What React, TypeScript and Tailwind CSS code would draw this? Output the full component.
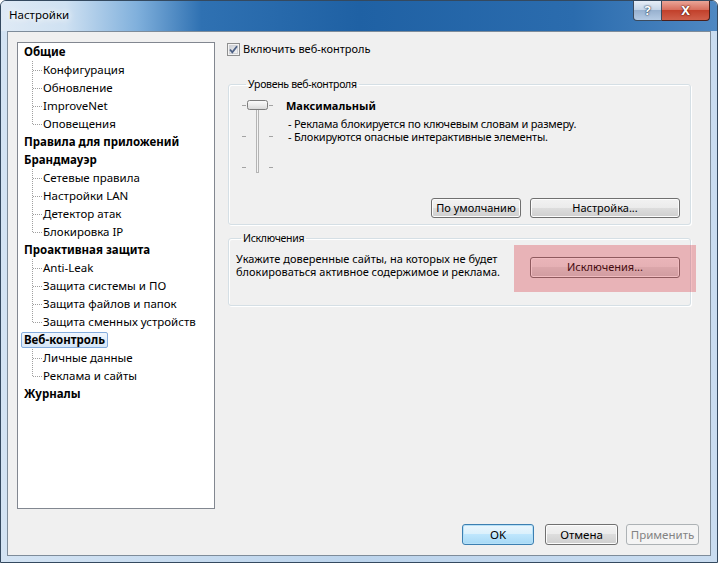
import React from "react";

const font = "font-['Noto_Sans','Liberation_Sans',sans-serif]";

type TreeNode = { label: string; children?: string[]; selected?: boolean };

const tree: TreeNode[] = [
  { label: "Общие", children: ["Конфигурация", "Обновление", "ImproveNet", "Оповещения"] },
  { label: "Правила для приложений" },
  { label: "Брандмауэр", children: ["Сетевые правила", "Настройки LAN", "Детектор атак", "Блокировка IP"] },
  {
    label: "Проактивная защита",
    children: ["Anti-Leak", "Защита системы и ПО", "Защита файлов и папок", "Защита сменных устройств"],
  },
  { label: "Веб-контроль", children: ["Личные данные", "Реклама и сайты"], selected: true },
  { label: "Журналы" },
];

function Connector({ last }: { last: boolean }) {
  return (
    <svg width="11" height="18" className="shrink-0">
      <line x1="0.5" y1="0" x2="0.5" y2={last ? 9 : 18} stroke="#a0a0a0" strokeDasharray="1 1" />
      <line x1="1" y1="9.5" x2="10" y2="9.5" stroke="#a0a0a0" strokeDasharray="1 1" />
    </svg>
  );
}

function TreeView() {
  return (
    <div className="w-[198px] h-[467px] shrink-0 bg-white border border-[#828790] text-[11.5px] text-black">
      {tree.map((node) => (
        <div key={node.label}>
          <div className="h-[18px] flex items-center pl-[3px]">
            <span
              className={
                "h-[16px] flex items-center px-[2px] border rounded-[2px] font-bold " +
                (node.selected
                  ? "border-[#84acdd] bg-gradient-to-b from-[#f0f6fd] to-[#d5e6f8]"
                  : "border-transparent")
              }
            >
              {node.label}
            </span>
          </div>
          {node.children?.map((c, i) => (
            <div key={c} className="h-[18px] flex items-center pl-[14px]">
              <Connector last={i === node.children!.length - 1} />
              <span className="whitespace-nowrap">{c}</span>
            </div>
          ))}
        </div>
      ))}
    </div>
  );
}

function WinButton({
  children,
  className = "",
  kind = "normal",
}: {
  children: React.ReactNode;
  className?: string;
  kind?: "normal" | "default" | "disabled";
}) {
  const look =
    kind === "default"
      ? "border-[#3c7fb1] bg-[linear-gradient(#ebf6fd_0%,#d9f0fc_50%,#bee6fd_50%,#a7d9f5_100%)] shadow-[inset_0_0_0_1px_#b6e0f7]"
      : kind === "disabled"
        ? "border-[#adb2b5] bg-[#f4f4f4] text-[#838383]"
        : "border-[#707070] bg-[linear-gradient(#f2f2f2_0%,#ebebeb_50%,#dddddd_50%,#cfcfcf_100%)] shadow-[inset_0_0_0_1px_#fcfcfc]";
  return (
    <div
      className={"flex items-center justify-center border rounded-[3px] whitespace-nowrap " + look + " " + className}
    >
      {children}
    </div>
  );
}

function Checkbox() {
  return (
    <svg width="13" height="13" className="shrink-0">
      <defs>
        <linearGradient id="cb" x1="0" y1="0" x2="1" y2="1">
          <stop offset="0" stopColor="#cbcfd5" />
          <stop offset="1" stopColor="#f6f6f6" />
        </linearGradient>
      </defs>
      <rect x="0.5" y="0.5" width="12" height="12" fill="#f4f4f4" stroke="#8e8f8f" />
      <rect x="2.5" y="2.5" width="8" height="8" fill="url(#cb)" stroke="#d0d2d6" />
      <path d="M3 6.5 L5.3 9.3 L10 3.2" fill="none" stroke="#4d6185" strokeWidth="1.8" />
    </svg>
  );
}

function Slider() {
  const ticks = [7.5, 38.5, 69.5];
  return (
    <svg width="34" height="76" className="shrink-0">
      <defs>
        <linearGradient id="th" x1="0" y1="0" x2="0" y2="1">
          <stop offset="0" stopColor="#fbfbfb" />
          <stop offset="0.5" stopColor="#ececec" />
          <stop offset="1" stopColor="#d6d6d6" />
        </linearGradient>
      </defs>
      {ticks.map((y) => (
        <g key={y} stroke="#a3a3a3">
          <line x1="1" y1={y} x2="5" y2={y} />
          <line x1="28" y1={y} x2="32" y2={y} />
        </g>
      ))}
      <rect x="15.5" y="4.5" width="2" height="70" fill="#f4f4f4" stroke="#b4b4b4" />
      <rect x="6.5" y="2.5" width="20" height="9" rx="2" fill="url(#th)" stroke="#7d7d7d" />
    </svg>
  );
}

function GroupBox({ title, children, className = "" }: { title: string; children: React.ReactNode; className?: string }) {
  return (
    <fieldset
      className={
        "border border-[#d5dfe5] rounded-[3px] shadow-[inset_1px_1px_0_#ffffff,1px_1px_0_#ffffff] " + className
      }
    >
      <legend className="ml-[5px] px-[2px] leading-[16px] text-[10.5px] tracking-[-0.3px]">{title}</legend>
      {children}
    </fieldset>
  );
}

function TitleBar() {
  return (
    <div className="h-[30px] flex items-start bg-[linear-gradient(90deg,#dfeaf5_0%,#cfe1f2_9%,#80b0dc_19%,#2f71b2_28%,#1f61a4_50%,#2b6cae_80%,#4f88c2_100%)]">
      <div className="pl-[8px] pt-[5px] text-[11.5px] text-black [text-shadow:0_0_6px_#ffffff,0_0_10px_#ffffff]">
        Настройки
      </div>
      <div className="flex-1" />
      <div className="flex mr-[7px]">
        <div className="w-[29px] h-[20px] flex items-center justify-center border border-[#3b4b5e] border-t-0 rounded-bl-[4px] bg-[linear-gradient(#e6eef7_0%,#c6d6e8_45%,#98b1cf_50%,#b5cbe4_100%)] text-white font-bold text-[13px] [text-shadow:0_0_2px_#1e3550,0_0_1px_#1e3550]">
          ?
        </div>
        <div className="w-[48px] h-[20px] flex items-center justify-center border border-[#4a1f1a] border-t-0 border-l-0 rounded-br-[4px] bg-[linear-gradient(#eaa597_0%,#d8705f_45%,#c2412c_50%,#d0604b_100%)] text-white font-bold text-[13px] [text-shadow:0_0_2px_#4a0d05,0_0_1px_#4a0d05]">
          X
        </div>
      </div>
    </div>
  );
}

export default function App() {
  return (
    <div
      className={
        "w-[718px] h-[563px] flex flex-col overflow-hidden rounded-t-[6px] border border-[#34495f] bg-[linear-gradient(90deg,#d3e3f3_0%,#bcd4ec_50%,#c9dcf0_100%)] " +
        font
      }
    >
      <TitleBar />
      <div className="ml-[6px] w-[704px] h-[525px] border border-[#7e8c9a] bg-[#f0f0f0] flex flex-col text-black">
        <div className="flex pt-[10px] pl-[9px]">
          <TreeView />
          <div className="ml-[12px] w-[464px] flex flex-col text-[11px]">
            <div className="h-[14px] flex items-center">
              <Checkbox />
              <span className="ml-[3px]">Включить веб-контроль</span>
            </div>

            <GroupBox title="Уровень веб-контроля" className="mt-[20px] ml-[1px] w-[463px] pl-[12px] pr-[10px] pb-[6px]">
              <div className="flex items-start mt-[6px]">
                <Slider />
                <div className="ml-[11px]">
                  <div className="font-bold leading-[16px] text-[11px]">Максимальный</div>
                  <div className="mt-[3px] pl-[2px] tracking-[-0.2px]">
                    <div className="h-[13px] leading-[13px]">- Реклама блокируется по ключевым словам и размеру.</div>
                    <div className="h-[13px] leading-[13px]">- Блокируются опасные интерактивные элементы.</div>
                  </div>
                </div>
              </div>
              <div className="flex justify-end mt-[24px] gap-[9px]">
                <WinButton className="w-[90px] h-[20px]">По умолчанию</WinButton>
                <WinButton className="w-[150px] h-[20px]">Настройка...</WinButton>
              </div>
            </GroupBox>

            <GroupBox title="Исключения" className="mt-[5px] ml-[1px] w-[463px] pl-[7px] pr-[10px] pb-[27px]">
              <div className="flex items-start justify-between mt-[6px]">
                <div>
                  <div className="h-[13px] leading-[13px]">Укажите доверенные сайты, на которых не будет</div>
                  <div className="h-[13px] leading-[13px]">блокироваться активное содержимое и реклама.</div>
                </div>
                <div className="relative mt-[5px]">
                  <WinButton className="w-[150px] h-[21px]">Исключения...</WinButton>
                  <div className="absolute -left-[16px] -right-[16px] -top-[12px] -bottom-[14px] bg-[rgba(214,40,52,0.3)] pointer-events-none" />
                </div>
              </div>
            </GroupBox>
          </div>
        </div>

        <div className="flex justify-end mt-[15px] pr-[11px] text-[11.5px]">
          <WinButton kind="default" className="w-[72px] h-[21px]">
            OK
          </WinButton>
          <WinButton className="w-[73px] h-[21px] ml-[11px]">Отмена</WinButton>
          <WinButton kind="disabled" className="w-[73px] h-[21px] ml-[8px]">
            Применить
          </WinButton>
        </div>
      </div>
    </div>
  );
}
